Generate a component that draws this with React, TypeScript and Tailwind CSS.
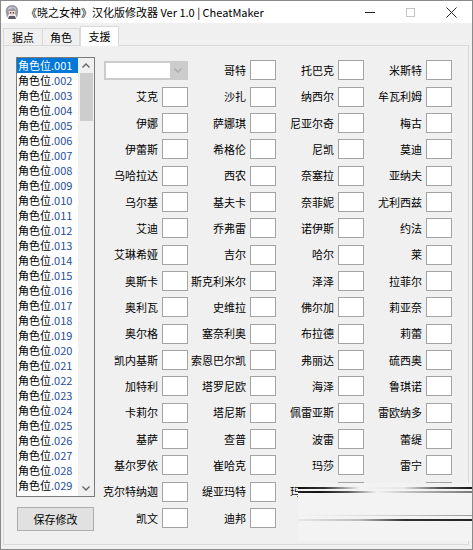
import React from 'react';

const rows: string[][] = [
  ['', '哥特', '托巴克', '米斯特'],
  ['艾克', '沙扎', '纳西尔', '牟瓦利姆'],
  ['伊娜', '萨娜琪', '尼亚尔奇', '梅古'],
  ['伊蕾斯', '希格伦', '尼凯', '莫迪'],
  ['乌哈拉达', '西农', '奈塞拉', '亚纳夫'],
  ['乌尔基', '基夫卡', '奈菲妮', '尤利西兹'],
  ['艾迪', '乔弗雷', '诺伊斯', '约法'],
  ['艾琳希娅', '吉尔', '哈尔', '莱'],
  ['奥斯卡', '斯克利米尔', '泽泽', '拉菲尔'],
  ['奥利瓦', '史维拉', '佛尔加', '莉亚奈'],
  ['奥尔格', '塞奈利奥', '布拉德', '莉蕾'],
  ['凯内基斯', '索恩巴尔凯', '弗丽达', '硫西奥'],
  ['加特利', '塔罗尼欧', '海泽', '鲁琪诺'],
  ['卡莉尔', '塔尼斯', '佩雷亚斯', '雷欧纳多'],
  ['基萨', '查普', '波雷', '蕾缇'],
  ['基尔罗依', '崔哈克', '玛莎', '雷宁'],
  ['克尔特纳迦', '缇亚玛特', '玛莉亚娜', '莉莉'],
  ['凯文', '迪邦', '', ''],
];

const slots = Array.from({ length: 29 }, (_, i) => String(i + 1).padStart(3, '0'));

function AppIcon() {
  return (
    <svg width="16" height="16" viewBox="0 0 16 16">
      <path d="M2 9 C1 4 4 1 8 1 C12 1 15 4 14 9 L13 14 L11 10 L5 10 L3 14 Z" fill="#9a9aa6" />
      <path d="M4.5 7 C5 10 6 12 8 12 C10 12 11 10 11.5 7 Z" fill="#f3d9c6" />
      <path d="M3 7 C5 4 8 6 9 3 C10 6 12 5 13 7 L12 5 C11 2 5 2 4 5 Z" fill="#c8c8d2" />
      <rect x="6" y="8" width="1.2" height="1.5" fill="#3a3a55" />
      <rect x="8.8" y="8" width="1.2" height="1.5" fill="#3a3a55" />
      <path d="M5 12 L11 12 L12 15 L4 15 Z" fill="#5a5a6a" />
    </svg>
  );
}

function Chevron({ up, color = '#606060' }: { up?: boolean; color?: string }) {
  return (
    <svg width="8" height="5" viewBox="0 0 8 5">
      <path d={up ? 'M0.5 4.5 L4 1 L7.5 4.5' : 'M0.5 0.5 L4 4 L7.5 0.5'} fill="none" stroke={color} strokeWidth="1.3" />
    </svg>
  );
}

function Cell({ label }: { label: string }) {
  return (
    <div className="flex items-center justify-end gap-[4px]">
      <span className="text-[11px] whitespace-nowrap text-black">{label}</span>
      <div className="w-[26px] h-[20px] bg-white border border-[#a3a3a3]" />
    </div>
  );
}

export default function App() {
  return (
    <div className="w-[473px] h-[550px] relative bg-[#f0f0f0] border border-[#8a8a8a] flex flex-col overflow-hidden font-['Noto_Sans_CJK_SC','Liberation_Sans',sans-serif] text-black">
      {/* Title bar */}
      <div className="h-[22px] bg-white flex items-center shrink-0">
        <div className="ml-[3px]">
          <AppIcon />
        </div>
        <span className="ml-[6px] text-[11px] whitespace-nowrap">《晓之女神》汉化版修改器 Ver 1.0 | CheatMaker</span>
        <div className="ml-auto flex h-full">
          <div className="w-[41px] flex items-center justify-center">
            <div className="w-[10px] h-px bg-[#222]" />
          </div>
          <div className="w-[41px] flex items-center justify-center">
            <div className="w-[9px] h-[9px] border border-[#c4c4c4]" />
          </div>
          <div className="w-[41px] flex items-center justify-center">
            <svg width="11" height="11" viewBox="0 0 11 11">
              <path d="M0.5 0.5 L10.5 10.5 M10.5 0.5 L0.5 10.5" stroke="#222" strokeWidth="1" />
            </svg>
          </div>
        </div>
      </div>

      {/* Tabs */}
      <div className="h-[22px] flex items-end ml-[2px] shrink-0">
        <div className="w-[40px] h-[17px] border border-b-0 border-[#d9d9d9] text-[11px] flex items-center justify-center">据点</div>
        <div className="w-[37px] h-[17px] border border-l-0 border-b-0 border-[#d9d9d9] text-[11px] flex items-center justify-center">角色</div>
        <div className="w-[39px] h-[20px] bg-white border border-b-0 border-[#d9d9d9] text-[11px] flex items-center justify-center -mb-px relative z-10">支援</div>
      </div>

      {/* Panel */}
      <div className="ml-[2px] mr-[3px] h-[500px] border border-[#d9d9d9] flex pl-[12px] pt-[11px]">
        <div className="w-[79px] flex flex-col">
          <div className="h-[440px] bg-white border border-[#7a7a7a] flex">
            <div className="flex-1 flex flex-col">
              {slots.map((n, i) => (
                <div
                  key={n}
                  className={
                    i === 0
                      ? 'h-[15px] leading-[15px] text-[11px] pl-[1px] bg-[#0078d7] text-white whitespace-nowrap'
                      : 'h-[15px] leading-[15px] text-[11px] pl-[1px] whitespace-nowrap'
                  }
                >
                  角色位<span className={i === 0 ? 'text-white' : 'text-[#1f4e9c]'}>.{n}</span>
                </div>
              ))}
            </div>
            <div className="w-[16px] bg-[#f0f0f0] flex flex-col items-center">
              <div className="h-[15px] flex items-center justify-center">
                <Chevron up />
              </div>
              <div className="w-[13px] h-[48px] bg-[#cdcdcd]" />
              <div className="mt-auto h-[15px] flex items-center justify-center">
                <Chevron />
              </div>
            </div>
          </div>
          <div className="mt-[10px] ml-[1px] w-[77px] h-[24px] bg-[#e1e1e1] border border-[#adadad] text-[11px] flex items-center justify-center">
            保存修改
          </div>
        </div>

        <div className="ml-[5px] grid grid-cols-[repeat(4,88px)] auto-rows-[26.35px]">
          {rows.map((r, ri) =>
            r.map((label, ci) =>
              ri === 0 && ci === 0 ? (
                <div key={`${ri}-${ci}`} className="flex items-center justify-end">
                  <div className="w-[84px] h-[19px] bg-[#cccccc] p-[2px] flex">
                    <div className="flex-1 bg-white" />
                    <div className="w-[16px] flex items-center justify-center">
                      <Chevron color="#a8a8a8" />
                    </div>
                  </div>
                </div>
              ) : label ? (
                <Cell key={`${ri}-${ci}`} label={label} />
              ) : (
                <div key={`${ri}-${ci}`} />
              )
            )
          )}
        </div>
      </div>

      {/* rendering glitch over the lower right corner */}
      <div className="absolute left-[297px] top-[482px] w-[176px] h-[58px] bg-[#f3f3f3]">
        <div className="mt-[4px] h-[2px] bg-[linear-gradient(to_right,#111_0%,#333_15%,#f3f3f3_35%,#e6e6e6_60%,#555_80%,#111_100%)]" />
        <div className="mt-[2px] h-[2px] bg-[linear-gradient(to_right,#222_0%,#111_12%,#555_28%,#f3f3f3_45%,#bbb_65%,#777_100%)]" />
        <div className="mt-[22px] h-px bg-[linear-gradient(to_right,#f3f3f3_0%,#dddddd_40%,#999_100%)]" />
        <div className="mt-[3px] h-[2px] bg-[linear-gradient(to_right,#e8e8e8_0%,#bbb_35%,#333_60%,#222_100%)]" />
      </div>
    </div>
  );
}
